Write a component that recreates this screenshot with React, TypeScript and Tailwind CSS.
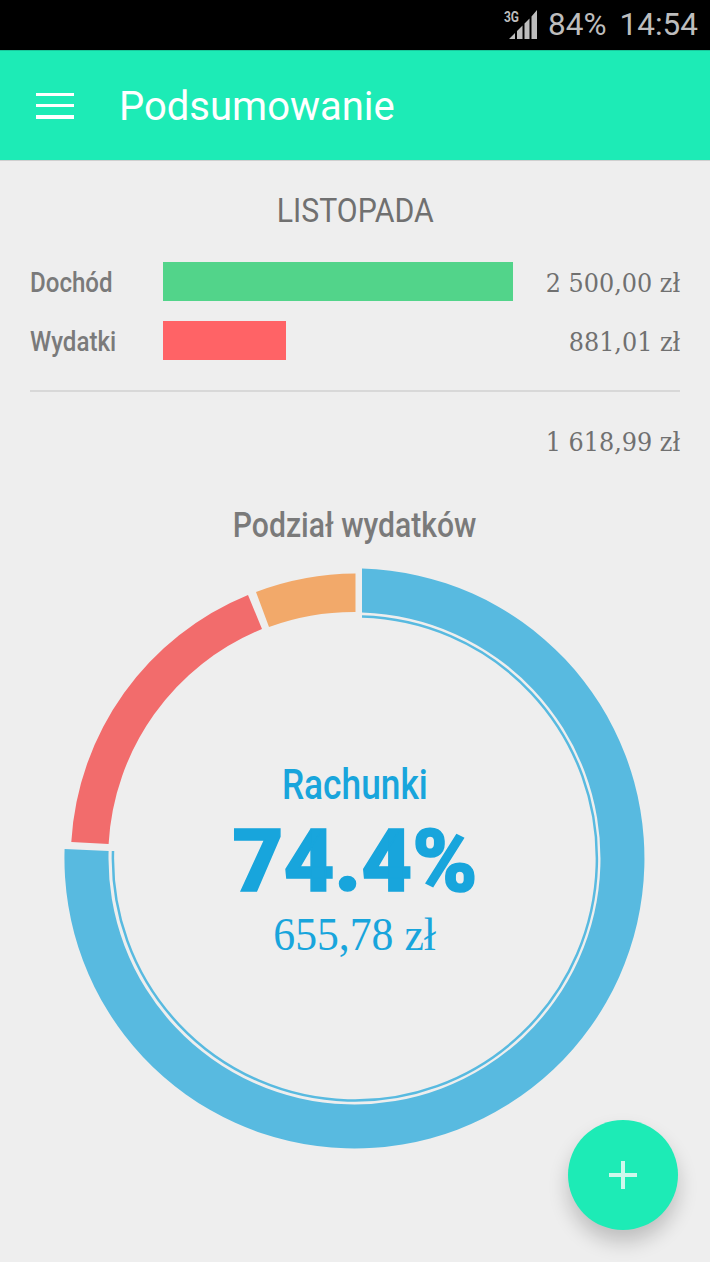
import React from "react";
import { Plus } from "lucide-react";

// ring pieces are given by their four corners, the gaps in the chart are not radial
const ringPiece = (
  outer: number,
  inner: number,
  a: [number, number],
  b: [number, number],
  c: [number, number],
  d: [number, number],
  large: number
) =>
  `M${a[0]} ${a[1]}A${outer} ${outer} 0 ${large} 1 ${b[0]} ${b[1]}L${c[0]} ${c[1]}A${inner} ${inner} 0 ${large} 0 ${d[0]} ${d[1]}Z`;

const Condensed: React.FC<{ className?: string; children: React.ReactNode }> = ({ className, children }) => (
  <span className={`inline-block whitespace-nowrap ${className ?? ""}`}>{children}</span>
);

const Row: React.FC<{ label: string; value: string; barClass: string }> = ({ label, value, barClass }) => (
  <div className="flex items-center h-[39px]">
    <div className="w-[133px] text-[28px] leading-none font-medium pt-[3px] text-[#7A7A7A]">
      <Condensed className="origin-left scale-x-[0.86]">{label}</Condensed>
    </div>
    <div className="flex-1">
      <div className={`h-[39px] ${barClass}`} />
    </div>
    <div className="text-[26px] leading-none pt-[2px] font-['DejaVu_Serif',serif]">
      <Condensed className="origin-right scale-x-[0.92]">{value}</Condensed>
    </div>
  </div>
);

const Donut: React.FC = () => (
  <svg width="710" height="600" viewBox="0 558 710 600" className="block">
    <path
      fill="#58BAE0"
      d={ringPiece(290, 246, [362, 568.6], [64.6, 849], [108.6, 851], [362, 612.6], 1)}
    />
    <path
      fill="#F26C6C"
      d={ringPiece(285, 247, [71.3, 842], [248, 595], [262, 629], [108.6, 844], 0)}
    />
    <path
      fill="#F2A96A"
      d={ringPiece(285, 247, [256, 592], [355.5, 573.5], [355.5, 612], [269, 627], 0)}
    />
    <path fill="none" stroke="#58BAE0" strokeWidth="2.5" d="M362 616.6A242 242 0 1 1 113 851" />
  </svg>
);

export default function App() {
  return (
    <div className="relative w-[710px] h-[1262px] overflow-hidden bg-[#EEEEEE] text-[#707070] font-['Roboto',sans-serif]">
      {/* status bar */}
      <div className="h-[50px] bg-black flex items-center justify-end pr-[12px] gap-[13px] text-[#BDBDBD] text-[31.5px] leading-none">
        <div className="flex items-center gap-[11px]">
          <div className="relative w-[29px] h-[32px]">
            <svg width="29" height="32" viewBox="0 0 29 32" className="absolute left-0 top-0">
              <path fill="#BDBDBD" d="M1 30 L7 24 V30Z M9 30 V22 L14.5 16.5 V30Z M16.5 30 V14.5 L21.5 9.5 V30Z M23.5 30 V7.5 L29 1 V30Z" />
            </svg>
            <span className="absolute left-[-6px] top-[1px] text-[15px] font-bold leading-none text-[#BDBDBD] scale-x-[0.8]">3G</span>
          </div>
          <span>84%</span>
        </div>
        <span>14:54</span>
      </div>

      {/* toolbar */}
      <div className="h-[111px] bg-[#1DEBB6] border-t border-t-[#19C79B] border-b border-b-[#CFCFCF] flex items-center pl-[36px]">
        <div className="w-[38px] h-[26px] flex flex-col justify-between">
          <div className="h-[3.5px] bg-white" />
          <div className="h-[3.5px] bg-white" />
          <div className="h-[3.5px] bg-white" />
        </div>
        <h1 className="ml-[45px] text-white text-[40px] leading-none pt-[3px]">Podsumowanie</h1>
      </div>

      {/* month summary */}
      <div className="px-[30px]">
        <div className="pt-[32px] h-[101px] text-center text-[34px] leading-[34px]">
          <Condensed className="scale-x-[0.89]">LISTOPADA</Condensed>
        </div>
        <div className="flex flex-col gap-[20px]">
          <Row label="Dochód" value="2 500,00 zł" barClass="w-[350px] bg-[#52D48A]" />
          <Row label="Wydatki" value="881,01 zł" barClass="w-[123px] bg-[#FF6366]" />
        </div>
        <div className="mt-[30px] border-t-2 border-[#D8D8D8]" />
        <div className="mt-[37px] text-right text-[26px] leading-none font-['DejaVu_Serif',serif]">
          <Condensed className="origin-right scale-x-[0.92]">1 618,99 zł</Condensed>
        </div>
        <div className="mt-[53px] text-center text-[35px] leading-none font-medium text-[#7A7A7A]">
          <Condensed className="scale-x-[0.86]">Podział wydatków</Condensed>
        </div>
      </div>

      {/* expenses chart */}
      <div className="relative mt-[15px]">
        <Donut />
        <div className="absolute left-0 right-0 top-[206px] flex flex-col items-center text-[#18A5DC]">
          <div className="text-[42px] leading-[42px] font-medium">
            <Condensed className="scale-x-[0.84]">Rachunki</Condensed>
          </div>
          <div className="text-[88px] leading-[70px] font-black mt-[20px] [-webkit-text-stroke:1.5px_#18A5DC]">74.4%</div>
          <div className="text-[46px] leading-[40px] font-['Liberation_Serif',serif] mt-[19px] scale-x-[0.95]">655,78 zł</div>
        </div>
      </div>

      {/* add button */}
      <button className="absolute left-[568px] top-[1120px] w-[110px] h-[110px] rounded-full bg-[#1DEBB6] flex items-center justify-center shadow-[0_12px_20px_rgba(0,0,0,0.2)]">
        <Plus size={48} strokeWidth={4} absoluteStrokeWidth color="#CFF8EC" strokeLinecap="butt" />
      </button>
    </div>
  );
}
